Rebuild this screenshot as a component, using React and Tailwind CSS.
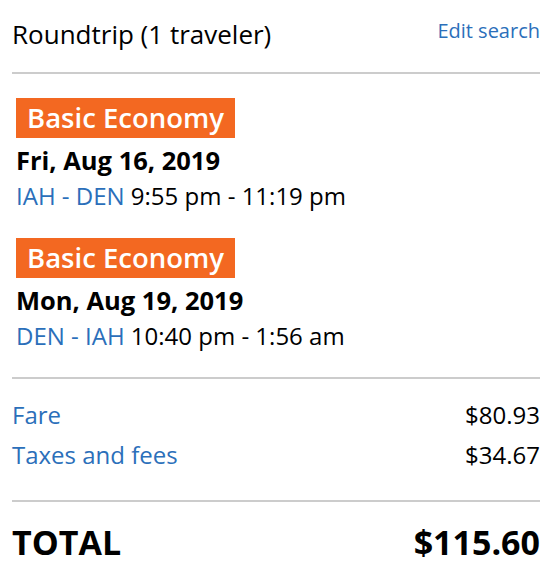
const segments = [
  { date: "Fri, Aug 16, 2019", route: "IAH - DEN", time: "9:55 pm - 11:19 pm" },
  { date: "Mon, Aug 19, 2019", route: "DEN - IAH", time: "10:40 pm - 1:56 am" },
];

const Divider = ({ className = "" }) => <div className={`h-[2px] bg-[#cccccc] ${className}`} />;

export default function App() {
  return (
    <div className="bg-white min-h-screen px-[12px] pr-[18px] text-black" style={{ fontFamily: '"Open Sans", sans-serif' }}>
      <div className="flex justify-between items-start pt-[18px]">
        <div className="text-[26px] leading-[32px]">Roundtrip (1 traveler)</div>
        <a className="text-[20px] leading-[32px] text-[#2b6fba] -mt-[3px]">Edit search</a>
      </div>
      <Divider className="mt-[22px]" />

      <div className="pl-[4px]">
        {segments.map((s, i) => (
          <div key={i} className={i === 0 ? "mt-[24px]" : "mt-[22px]"}>
            <div className="inline-flex items-center h-[40px] px-[11px] bg-[#f36821] text-white font-semibold text-[27.5px]">
              Basic Economy
            </div>
            <div className="mt-[6px] text-[25.5px] leading-[32px] font-bold">{s.date}</div>
            <div className="text-[24px] leading-[40px]">
              <span className="text-[#2b6fba]">{s.route}</span> {s.time}
            </div>
          </div>
        ))}
      </div>

      <Divider className="mt-[21px]" />

      <div className="mt-[16px] text-[24px]">
        <div className="flex justify-between leading-[40px]">
          <span className="text-[#2b6fba]">Fare</span>
          <span>$80.93</span>
        </div>
        <div className="flex justify-between leading-[40px]">
          <span className="text-[#2b6fba]">Taxes and fees</span>
          <span>$34.67</span>
        </div>
      </div>

      <Divider className="mt-[25px]" />

      <div className="mt-[18px] flex justify-between text-[34px] leading-[44px] font-bold">
        <span>TOTAL</span>
        <span>$115.60</span>
      </div>
    </div>
  );
}
